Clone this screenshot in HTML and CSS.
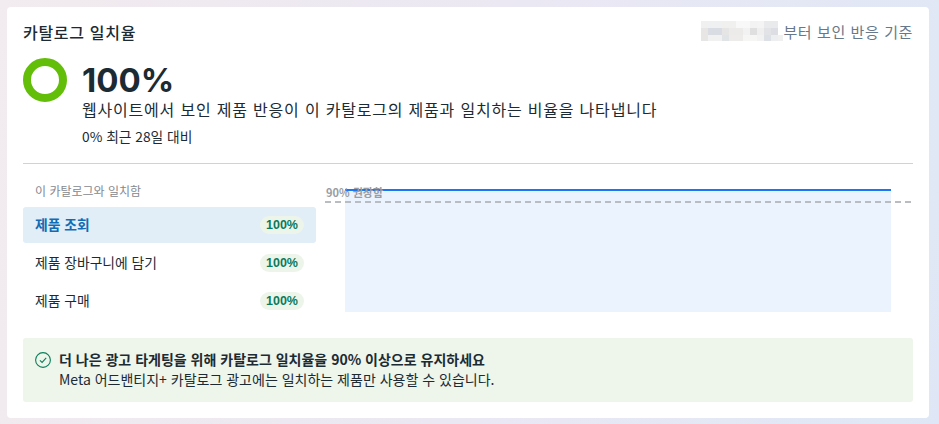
FILE: index.html
```html
<!DOCTYPE html>
<html lang="ko">
<head>
<meta charset="utf-8">
<title>카탈로그 일치율</title>
<link rel="stylesheet" href="styles.css">
</head>
<body>
<main class="card">
  <header class="head">
    <h1 class="title">카탈로그 일치율</h1>
    <div class="basis">
      <svg class="mosaic" width="82" height="20" viewBox="0 0 82 20" aria-hidden="true">
        <rect width="82" height="20" fill="#f4f4f5"/>
        <rect x="0" y="0" width="7" height="7" fill="#f1f0f0"/>
        <rect x="7" y="0" width="14" height="7" fill="#eff0f1"/>
        <rect x="21" y="0" width="14" height="7" fill="#f0f0ef"/>
        <rect x="35" y="0" width="14" height="7" fill="#f8f8f8"/>
        <rect x="49" y="0" width="7" height="7" fill="#f3f3f3"/>
        <rect x="63" y="0" width="14" height="7" fill="#e9eaec"/>
        <rect x="0" y="7" width="7" height="7" fill="#e8e6e5"/>
        <rect x="7" y="7" width="14" height="7" fill="#d9dce2"/>
        <rect x="21" y="7" width="7" height="7" fill="#e6e5e5"/>
        <rect x="28" y="7" width="14" height="7" fill="#ecebea"/>
        <rect x="42" y="7" width="7" height="7" fill="#f2f2f2"/>
        <rect x="49" y="7" width="7" height="7" fill="#dfdfdf"/>
        <rect x="56" y="7" width="7" height="7" fill="#efefef"/>
        <rect x="63" y="7" width="7" height="7" fill="#e2e3e6"/>
        <rect x="70" y="7" width="7" height="7" fill="#dcdee3"/>
        <rect x="0" y="14" width="7" height="6" fill="#e8e6e5"/>
        <rect x="7" y="14" width="14" height="6" fill="#f1f1f1"/>
        <rect x="21" y="14" width="7" height="6" fill="#e1e4e7"/>
        <rect x="28" y="14" width="14" height="6" fill="#eeecea"/>
        <rect x="42" y="14" width="14" height="6" fill="#f6f6f5"/>
        <rect x="56" y="14" width="7" height="6" fill="#f2f2f2"/>
        <rect x="63" y="14" width="7" height="6" fill="#dde0e5"/>
        <rect x="70" y="14" width="7" height="6" fill="#eceef0"/>
        <rect x="77" y="0" width="5" height="14" fill="#ffffff"/>
        <rect x="77" y="14" width="5" height="6" fill="#f0f0f1"/>
      </svg>
      <span>부터 보인 반응 기준</span>
    </div>
  </header>

  <section class="summary">
    <svg class="donut" width="44" height="44" viewBox="0 0 44 44" aria-hidden="true">
      <circle cx="22" cy="22" r="18" fill="none" stroke="#63be09" stroke-width="8"/>
    </svg>
    <div class="summary-text">
      <div class="value">100%</div>
      <p class="desc">웹사이트에서 보인 제품 반응이 이 카탈로그의 제품과 일치하는 비율을 나타냅니다</p>
      <p class="delta">0% 최근 28일 대비</p>
    </div>
  </section>

  <section class="detail">
    <div class="list">
      <div class="list-label">이 카탈로그와 일치함</div>
      <div class="row active"><span>제품 조회</span><span class="pill">100%</span></div>
      <div class="row"><span>제품 장바구니에 담기</span><span class="pill">100%</span></div>
      <div class="row"><span>제품 구매</span><span class="pill">100%</span></div>
    </div>
    <div class="chart">
      <div class="area"></div>
      <div class="threshold"></div>
      <div class="threshold-label">90% 권장함</div>
    </div>
  </section>

  <aside class="notice">
    <svg class="check" width="16" height="16" viewBox="0 0 16 16" aria-hidden="true">
      <circle cx="8" cy="8" r="7.4" fill="none" stroke="#0a7f5a" stroke-width="1.1"/>
      <path d="M4.9 8.3 7.1 10.4 11.2 5.9" fill="none" stroke="#0a7f5a" stroke-width="1.1"/>
    </svg>
    <div class="notice-text">
      <strong>더 나은 광고 타게팅을 위해 카탈로그 일치율을 90% 이상으로 유지하세요</strong>
      <p>Meta 어드밴티지+ 카탈로그 광고에는 일치하는 제품만 사용할 수 있습니다.</p>
    </div>
  </aside>
</main>
</body>
</html>
```

FILE: styles.css
```css
* { box-sizing: border-box; }
html, body { height: 100%; }
body {
  margin: 0;
  padding: 7px 10px 6px 7px;
  overflow: hidden;
  background: linear-gradient(100deg, #f2ebef 0%, #ebe8f3 50%, #dfe7f6 100%);
  font-family: "Noto Sans CJK KR", "Liberation Sans", sans-serif;
  color: #1c2b33;
}
.card {
  width: 922px;
  height: 411px;
  padding: 15px 16px 16px;
  background: #fff;
  border-radius: 4px;
}
.head {
  display: flex;
  justify-content: space-between;
  align-items: center;
  height: 20px;
}
.title {
  margin: 0;
  font-size: 16px;
  line-height: 20px;
  font-weight: 500;
  letter-spacing: 0.7px;
}
.basis {
  display: flex;
  align-items: center;
  font-size: 15px;
  line-height: 20px;
  color: #67788a;
}
.basis span { letter-spacing: 0.6px; }
.mosaic { display: block; margin-top: -2px; }
.summary {
  display: flex;
  gap: 15px;
  margin-top: 17px;
  height: 105px;
  border-bottom: 1px solid #cfd2d6;
}
.donut { flex: none; margin-top: -1px; }
.summary-text { margin-top: 2px; }
.value {
  font-family: Inter, "Liberation Sans", sans-serif;
  font-size: 33px;
  font-weight: 700;
  line-height: 38px;
}
.desc {
  margin: 0;
  font-size: 16px;
  line-height: 20px;
  letter-spacing: 0.8px;
}
.delta {
  margin: 8px 0 0;
  font-size: 13.75px;
  line-height: 18px;
}
.detail {
  display: flex;
  margin-top: 16px;
}
.list { width: 293px; flex: none; }
.list-label {
  padding-left: 12px;
  height: 27px;
  font-size: 12px;
  line-height: 22px;
  color: #84898f;
}
.row {
  display: flex;
  justify-content: space-between;
  align-items: center;
  height: 36px;
  padding: 0 12px;
  margin-bottom: 2px;
  border-radius: 3px;
  font-size: 13.8px;
}
.row > span:first-child { margin-top: -2px; }
.row.active {
  background: #e1edf7;
  color: #0f6cb5;
  font-weight: 700;
}
.pill {
  width: 44px;
  height: 18px;
  border-radius: 9px;
  background: #edf5ea;
  color: #0a7a5c;
  font-family: "Liberation Sans", sans-serif;
  font-size: 12.5px;
  line-height: 18px;
  font-weight: 700;
  text-align: center;
}
.chart {
  position: relative;
  flex: 1;
  height: 148px;
}
.area {
  position: absolute;
  left: 29px;
  top: 9px;
  width: 546px;
  height: 123px;
  background: #ebf3fe;
  border-top: 2px solid #1877f2;
}
.threshold {
  position: absolute;
  left: 9px;
  top: 21px;
  width: 586px;
  border-top: 2px dashed #b9bcc1;
}
.threshold-label {
  position: absolute;
  left: 10px;
  top: 4px;
  font-size: 11px;
  line-height: 16px;
  font-weight: 700;
  color: #9a9da3;
}
.notice {
  display: flex;
  gap: 8px;
  align-items: flex-start;
  margin-top: 10px;
  height: 64px;
  padding: 11px 12px;
  background: #eef5ea;
  border-radius: 3px;
}
.check { flex: none; margin-top: 3px; }
.notice-text strong {
  display: block;
  font-size: 14px;
  line-height: 20px;
  font-weight: 700;
}
.notice-text p {
  margin: 0;
  font-size: 14px;
  line-height: 20px;
}
```
